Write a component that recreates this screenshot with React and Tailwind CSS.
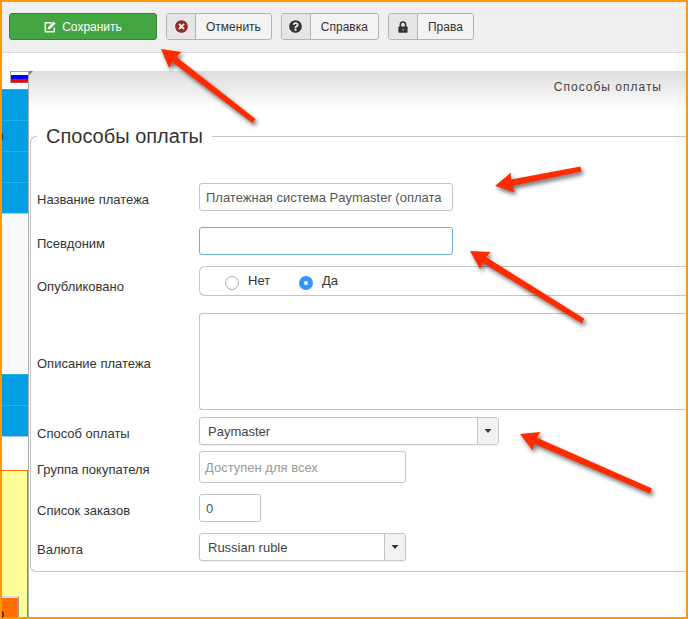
import React, { useState } from 'react';
import { FaTimesCircle, FaQuestionCircle } from 'react-icons/fa';

const EditIcon = () => (
  <svg viewBox="0 0 12 12" className="w-3 h-3" aria-hidden="true">
    <path d="M7.6 1.8H1.3v9h9V6.6" fill="none" stroke="#fff" strokeWidth="1.5" strokeLinejoin="round" />
    <path d="M3.6 8.6l0.6-2.6L9.6 0.6l2 2L6.2 8z" fill="#fff" />
  </svg>
);

const LockIcon = () => (
  <svg viewBox="0 0 10 12" className="w-[10px] h-3" aria-hidden="true">
    <path d="M2.4 6V3.6a2.6 2.6 0 0 1 5.2 0V6" fill="none" stroke="#333" strokeWidth="1.6" />
    <rect x="0.4" y="5.4" width="9.2" height="6.4" rx="0.8" fill="#333" />
    <rect x="4.5" y="7.8" width="1.2" height="1.8" fill="#bbb" />
  </svg>
);

const toolbarItems = [
  { key: 'cancel', label: 'Отменить', icon: <FaTimesCircle className="w-[13px] h-[13px] text-[#942a25]" /> },
  { key: 'help', label: 'Справка', icon: <FaQuestionCircle className="w-[13px] h-[13px] text-[#333]" /> },
  { key: 'rights', label: 'Права', icon: <LockIcon /> }
];

const arrows = [
  { tip: [161, 49], tail: [254, 121] },
  { tip: [495, 186], tail: [581, 169] },
  { tip: [470, 251], tail: [583, 321] },
  { tip: [520, 434], tail: [651, 491] }
];

const Toolbar = () => (
  <header className="flex gap-[9px] bg-[#efefef] border-b border-[#d9d9d9] px-[7px] pt-[11px] pb-3">
    <button
      type="button"
      className="flex items-center justify-center gap-[6px] w-[148px] h-[27px] rounded-[3px] border border-[#378137] bg-[#43a643] text-white text-[12px]"
    >
      <EditIcon />
      Сохранить
    </button>
    {toolbarItems.map(item => (
      <button
        key={item.key}
        type="button"
        className="flex items-stretch h-[27px] rounded-[3px] border border-[#b3b3b3] bg-[#f3f3f3] text-[#333] text-[12px] overflow-hidden"
      >
        <span className="flex items-center justify-center w-[29px] bg-[#e6e6e6] border-r border-[#b3b3b3]">
          {item.icon}
        </span>
        <span className="flex items-center px-[10px] pt-px">{item.label}</span>
      </button>
    ))}
  </header>
);

const MenuItem = ({ label }) => (
  <a href="#menu" className="flex items-center h-[31px] bg-[#009fe3] border-t border-[#1fb0ec] text-[13px] text-[#333]">
    <span className="flex justify-end w-[2px] overflow-hidden">
      <span className="shrink-0">{label}</span>
    </span>
  </a>
);

const Sidebar = () => (
  <aside className="flex flex-col w-[26px] shrink-0">
    <div className="flex justify-end pb-[6px]">
      <svg viewBox="0 0 18 12" className="w-[18px] h-3" aria-hidden="true">
        <rect width="18" height="12" fill="#aaa" />
        <rect x="1" y="1" width="17" height="3" fill="#fff" />
        <rect x="1" y="4" width="17" height="4" fill="#00f" />
        <rect x="1" y="8" width="17" height="3" fill="#f00" />
        <rect x="1" y="11" width="17" height="1" fill="#c44" />
      </svg>
    </div>
    <MenuItem />
    <MenuItem label="Товары" />
    <MenuItem />
    <MenuItem />
    <div className="h-[161px] bg-[#fafafa] border-t border-[#ccc]" />
    <MenuItem />
    <MenuItem />
    <div className="h-[34px] border-t border-[#aac8e6]" />
    <div className="flex flex-1 flex-col justify-end items-start bg-[#ffff99] border-t border-r border-[#ff6d00]">
      <button
        type="button"
        className="flex items-center w-[17px] h-[21px] pt-3 bg-[#ff6d00] border-t-2 border-t-[#ddd] border-r-2 border-r-[#999] text-[12px] text-black"
      >
        <span className="flex justify-end w-[2px] overflow-hidden">
          <span className="shrink-0">Инфо</span>
        </span>
      </button>
    </div>
  </aside>
);

const Row = ({ id, label, className = '', children }) => (
  <div className={`flex ${className}`}>
    <label htmlFor={id} className="flex items-center w-[162px] shrink-0 pt-[5px]">
      {label}
    </label>
    <div className="flex-1 min-w-0">{children}</div>
  </div>
);

const SelectBox = ({ id, options, className }) => (
  <div className={`flex h-7 rounded-[3px] border border-[#c4c4c4] bg-white shadow-xs overflow-hidden ${className}`}>
    <select id={id} className="flex-1 min-w-0 appearance-none px-2 pt-px text-[#444] outline-none">
      {options.map(option => (
        <option key={option}>{option}</option>
      ))}
    </select>
    <span className="flex items-center justify-center w-[21px] bg-[#f2f2f2] border-l border-[#c4c4c4]">
      <svg viewBox="0 0 8 4" className="w-2 h-1" aria-hidden="true">
        <path d="M0.5 0h7L4 4z" fill="#333" />
      </svg>
    </span>
  </div>
);

const Arrow = ({ tip, tail }) => {
  const dx = tail[0] - tip[0];
  const dy = tail[1] - tip[1];
  const len = Math.hypot(dx, dy);
  const angle = (Math.atan2(dy, dx) * 180) / Math.PI;

  return (
    <polygon
      points={`0,0 18,-10 17,-3.2 ${len},-2.6 ${len},2.6 17,3.2 18,10`}
      transform={`translate(${tip[0]} ${tip[1]}) rotate(${angle})`}
      fill="#ff2a00"
    />
  );
};

const PaymentForm = () => {
  const [name, setName] = useState('Платежная система Paymaster (оплата');
  const [alias, setAlias] = useState('');
  const [published, setPublished] = useState('yes');
  const [order, setOrder] = useState('0');

  const inputClass = 'block h-7 px-[6px] rounded-[3px] border bg-white text-[#555] outline-none';
  const radioClass = 'appearance-none w-[14px] h-[14px] mt-1 rounded-full border border-[#aaa] bg-white checked:border-[5px] checked:border-[#3395fb]';

  return (
    <form>
      <fieldset className="min-w-0 rounded-l-md border border-r-0 border-[#c4c4c4] pl-[6px] pb-[10px] text-[13px] text-[#333]">
        <legend className="px-[9px] text-[20px] leading-7">Способы оплаты</legend>
        <div className="flex flex-col pt-[33px]">
          <Row id="name" label="Название платежа" className="mb-4">
            <input
              id="name"
              type="text"
              value={name}
              onChange={e => setName(e.target.value)}
              className={`${inputClass} w-[254px] border-[#c4c4c4]`}
            />
          </Row>
          <Row id="alias" label="Псевдоним" className="mb-[11px]">
            <input
              id="alias"
              type="text"
              value={alias}
              onChange={e => setAlias(e.target.value)}
              className={`${inputClass} w-[254px] border-[#66afe9]`}
            />
          </Row>
          <Row id="published-yes" label="Опубликовано" className="h-9 mb-[11px]">
            <div className="flex items-center h-[30px] pl-[25px] rounded-l-md border border-r-0 border-[#c4c4c4]">
              <label className="flex items-center gap-[9px] w-[74px]">
                <input
                  type="radio"
                  name="published"
                  checked={published === 'no'}
                  onChange={() => setPublished('no')}
                  className={radioClass}
                />
                Нет
              </label>
              <label className="flex items-center gap-[9px]">
                <input
                  id="published-yes"
                  type="radio"
                  name="published"
                  checked={published === 'yes'}
                  onChange={() => setPublished('yes')}
                  className={radioClass}
                />
                Да
              </label>
            </div>
          </Row>
          <Row id="description" label="Описание платежа" className="mb-[7px]">
            <textarea
              id="description"
              className="block w-full h-[97px] resize-none rounded-l-[3px] border border-r-0 border-[#c4c4c4] px-[6px] py-1 outline-none"
            />
          </Row>
          <Row id="method" label="Способ оплаты" className="mb-[6px]">
            <SelectBox id="method" options={['Paymaster']} className="w-[300px]" />
          </Row>
          <Row id="group" label="Группа покупателя" className="mb-[11px]">
            <input
              id="group"
              type="text"
              placeholder="Доступен для всех"
              className="block w-[207px] h-8 px-[5px] rounded-[3px] border border-[#c4c4c4] placeholder:text-[#999] outline-none"
            />
          </Row>
          <Row id="order" label="Список заказов" className="mb-[11px]">
            <input
              id="order"
              type="text"
              value={order}
              onChange={e => setOrder(e.target.value)}
              className={`${inputClass} w-[62px] border-[#c4c4c4]`}
            />
          </Row>
          <Row id="currency" label="Валюта">
            <SelectBox id="currency" options={['Russian ruble']} className="w-[207px]" />
          </Row>
        </div>
      </fieldset>
    </form>
  );
};

const App = () => {
  return (
    <div className="relative flex flex-col min-h-screen border-2 border-[#ff9900] bg-white font-['Liberation_Sans',Arial,sans-serif]">
      <Toolbar />
      <div className="flex flex-1 pt-[18px]">
        <Sidebar />
        <main className="flex-1 min-w-0 border-l border-[#aaa]">
          <div className="flex items-start justify-between h-[51px] pr-6 bg-linear-to-b from-[#dfdddd] to-white to-75%">
            <svg viewBox="0 0 4 4" className="w-1 h-1" aria-hidden="true">
              <path d="M0 0h4L0 4z" fill="#777" />
            </svg>
            <span className="pt-2 text-[12px] leading-4 tracking-[1px] text-[#444]">Способы оплаты</span>
          </div>
          <div className="pl-px">
            <PaymentForm />
          </div>
        </main>
      </div>

      {/* Pointers over the form */}
      <svg
        viewBox="0 0 688 619"
        className="absolute -top-[2px] -left-[2px] w-[688px] h-[619px] pointer-events-none drop-shadow-[2px_3px_2px_rgba(0,0,0,0.55)]"
        aria-hidden="true"
      >
        {arrows.map((arrow, index) => (
          <Arrow key={index} tip={arrow.tip} tail={arrow.tail} />
        ))}
      </svg>
    </div>
  );
};

export default App;
